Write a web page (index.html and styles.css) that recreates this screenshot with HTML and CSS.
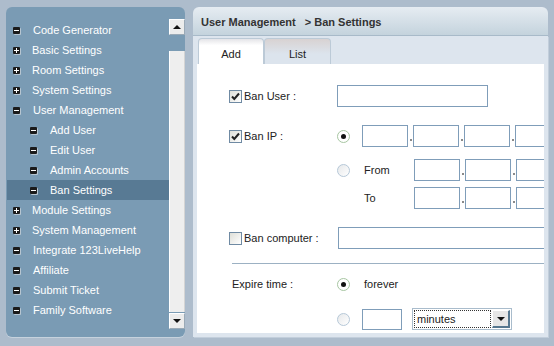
FILE: index.html
```html
<!DOCTYPE html>
<html>
<head>
    <meta charset="UTF-8">
    <title>Ban Settings</title>
    <link rel="stylesheet" href="styles.css">
</head>
<body>
    <div class="page">
        <aside class="sidebar">
            <ul class="menu">
                <li class="item"><span class="ico minus"></span>Code Generator</li>
                <li class="item"><span class="ico plus"></span>Basic Settings</li>
                <li class="item"><span class="ico plus"></span>Room Settings</li>
                <li class="item"><span class="ico plus"></span>System Settings</li>
                <li class="item"><span class="ico minus"></span>User Management</li>
                <li class="item sub"><span class="ico minus"></span>Add User</li>
                <li class="item sub"><span class="ico minus"></span>Edit User</li>
                <li class="item sub"><span class="ico minus"></span>Admin Accounts</li>
                <li class="item sub selected"><span class="ico minus"></span>Ban Settings</li>
                <li class="item"><span class="ico plus"></span>Module Settings</li>
                <li class="item"><span class="ico plus"></span>System Management</li>
                <li class="item"><span class="ico minus"></span>Integrate 123LiveHelp</li>
                <li class="item"><span class="ico minus"></span>Affiliate</li>
                <li class="item"><span class="ico minus"></span>Submit Ticket</li>
                <li class="item"><span class="ico minus"></span>Family Software</li>
            </ul>
            <div class="scrollbar">
                <div class="sb-btn up"></div>
                <div class="sb-thumb"></div>
                <div class="sb-btn down"></div>
            </div>
        </aside>

        <section class="main">
            <div class="main-head">User Management<span class="crumb">&gt; Ban Settings</span></div>
            <div class="main-body">
                <div class="tabs">
                    <div class="tab active">Add</div>
                    <div class="tab">List</div>
                </div>
                <div class="content">
                    <div class="row row-user">
                        <div class="label"><span class="cb checked"><svg width="11" height="11" viewBox="0 0 11 11"><path d="M2 5.5 L4.3 8 L9 2.5" fill="none" stroke="#222" stroke-width="2"/></svg></span>Ban User :</div>
                        <input type="text" class="field wide">
                    </div>

                    <div class="row row-ip">
                        <div class="label"><span class="cb checked"><svg width="11" height="11" viewBox="0 0 11 11"><path d="M2 5.5 L4.3 8 L9 2.5" fill="none" stroke="#222" stroke-width="2"/></svg></span>Ban IP :</div>
                        <div class="opt"><span class="radio on"></span></div>
                        <div class="ip">
                            <input type="text" class="field oct"><span class="dot"></span>
                            <input type="text" class="field oct"><span class="dot"></span>
                            <input type="text" class="field oct"><span class="dot"></span>
                            <input type="text" class="field oct">
                        </div>
                    </div>

                    <div class="row row-from">
                        <div class="label"></div>
                        <div class="opt"><span class="radio"></span></div>
                        <div class="range-label">From</div>
                        <div class="ip">
                            <input type="text" class="field oct"><span class="dot"></span>
                            <input type="text" class="field oct"><span class="dot"></span>
                            <input type="text" class="field oct"><span class="dot"></span>
                            <input type="text" class="field oct">
                        </div>
                    </div>

                    <div class="row row-to">
                        <div class="label"></div>
                        <div class="opt"></div>
                        <div class="range-label">To</div>
                        <div class="ip">
                            <input type="text" class="field oct"><span class="dot"></span>
                            <input type="text" class="field oct"><span class="dot"></span>
                            <input type="text" class="field oct"><span class="dot"></span>
                            <input type="text" class="field oct">
                        </div>
                    </div>

                    <div class="row row-computer">
                        <div class="label"><span class="cb"></span>Ban computer :</div>
                        <input type="text" class="field long">
                    </div>

                    <div class="divider"></div>

                    <div class="row row-expire">
                        <div class="label plain">Expire time :</div>
                        <div class="opt"><span class="radio on"></span></div>
                        <div class="opt-text">forever</div>
                    </div>

                    <div class="row row-period">
                        <div class="label"></div>
                        <div class="opt"><span class="radio"></span></div>
                        <input type="text" class="field amount">
                        <div class="select">
                            <div class="select-text">minutes</div>
                            <div class="select-btn"></div>
                        </div>
                    </div>
                </div>
            </div>
        </section>
    </div>
</body>
</html>
```

FILE: styles.css
```css
body {
    margin: 0;
    width: 554px;
    height: 346px;
    overflow: hidden;
    background-color: #adbccc;
    font-family: 'Liberation Sans', Arial, sans-serif;
    font-size: 11px;
}

.page {
    display: flex;
    gap: 8px;
    padding: 7px 0 0 6px;
}

/* left menu */
.sidebar {
    width: 179px;
    height: 330px;
    background-color: #7a9bb4;
    border-radius: 6px;
    box-shadow: 0 1px 0 #c6d2dd;
    display: flex;
    flex-shrink: 0;
}

.menu {
    list-style: none;
    margin: 0;
    padding: 13px 0 0 1px;
    width: 162px;
}

.item {
    display: flex;
    align-items: center;
    height: 20px;
    padding-left: 6px;
    color: #fff;
    white-space: nowrap;
}

.item.sub {
    padding-left: 23px;
}

.item.selected {
    background-color: #587a94;
}

.ico {
    position: relative;
    width: 7px;
    height: 7px;
    margin-right: 12px;
    background-color: #1b1b1b;
    border-radius: 1px;
    box-shadow: 1px 1px 0 #b7c6d2;
    flex-shrink: 0;
}

.ico.minus {
    margin-right: 13px;
}

.ico::before {
    content: '';
    position: absolute;
    left: 1px;
    top: 3px;
    width: 5px;
    height: 1px;
    background-color: #fff;
}

.ico.plus::after {
    content: '';
    position: absolute;
    left: 3px;
    top: 1px;
    width: 1px;
    height: 5px;
    background-color: #fff;
}

.scrollbar {
    width: 16px;
    margin-top: 12px;
    display: flex;
    flex-direction: column;
}

.sb-btn {
    height: 16px;
    box-sizing: border-box;
    background-color: #ececec;
    border: 1px solid;
    border-color: #fff #9aa9b6 #9aa9b6 #fff;
    display: flex;
    justify-content: center;
    align-items: center;
}

.sb-btn.up::before {
    content: '';
    border-left: 4px solid transparent;
    border-right: 4px solid transparent;
    border-bottom: 4px solid #111;
}

.sb-btn.down::before {
    content: '';
    border-left: 4px solid transparent;
    border-right: 4px solid transparent;
    border-top: 4px solid #111;
}

.sb-thumb {
    height: 261px;
    margin: 16px 0 1px;
    background-color: #eeeeee;
    border-left: 1px solid #fff;
    border-right: 1px solid #d4d4d4;
}

/* main panel */
.main {
    width: 355px;
    display: flex;
    flex-direction: column;
    flex-shrink: 0;
}

.main-head {
    height: 28px;
    line-height: 31px;
    padding-left: 8px;
    border-radius: 6px 6px 0 0;
    border-bottom: 1px solid #a8bac9;
    background: linear-gradient(#e6ecf2, #c4d3dd);
    font-weight: bold;
    color: #333;
}

.crumb {
    margin-left: 9px;
}

.main-body {
    background-color: #dde5ee;
    padding: 2px 4px 4px;
    box-shadow: 1px 1px 0 #c2cedb;
}

.tabs {
    display: flex;
    height: 26px;
    padding-left: 1px;
}

.tab {
    box-sizing: border-box;
    width: 66px;
    height: 26px;
    line-height: 30px;
    text-align: center;
    color: #222;
    border: 1px solid #bccad7;
    border-bottom: none;
    border-radius: 4px 4px 0 0;
    background: linear-gradient(#d8d2d2, #dce4ed 60%);
}

.tab.active {
    background: linear-gradient(#e4e4e8, #fff 25%);
}

.tab + .tab {
    width: 67px;
}

.content {
    height: 269px;
    background-color: #fff;
    overflow: hidden;
    padding-left: 32px;
    color: #222;
}

.row {
    display: flex;
    align-items: center;
    height: 22px;
    white-space: nowrap;
}

.row > * {
    flex-shrink: 0;
}

.row-user { margin-top: 21px; }
.row-ip { margin-top: 18px; }
.row-from { margin-top: 12px; }
.row-to { margin-top: 6px; }
.row-computer { margin-top: 18px; }
.row-expire { margin-top: 9px; }
.row-period { margin-top: 13px; }

.label {
    width: 108px;
    display: flex;
    align-items: center;
}

.label.plain {
    padding-left: 3px;
    width: 105px;
}

.cb {
    box-sizing: border-box;
    width: 13px;
    height: 13px;
    margin-right: 2px;
    border: 1px solid #6f8aa3;
    background: linear-gradient(135deg, #dedfd8, #fff);
    display: flex;
}

.opt {
    width: 25px;
    display: flex;
    align-items: center;
}

.radio {
    position: relative;
    box-sizing: border-box;
    width: 13px;
    height: 13px;
    border-radius: 50%;
    border: 1px solid #b6c8d8;
    background: linear-gradient(135deg, #e6e8ea, #fff);
}

.radio.on {
    border-color: #a7c6a2;
    background: #fff;
}

.radio.on::after {
    content: '';
    position: absolute;
    left: 3px;
    top: 3px;
    width: 5px;
    height: 5px;
    border-radius: 50%;
    background-color: #111;
}

.field {
    box-sizing: border-box;
    height: 22px;
    margin: 0;
    padding: 0 2px;
    border: 1px solid #7f9db9;
    background-color: #fff;
    font-family: inherit;
    font-size: 11px;
}

.field.wide {
    width: 151px;
}

.field.long {
    width: 230px;
    margin-left: 1px;
}

.field.amount {
    width: 40px;
    height: 21px;
}

.ip {
    display: flex;
    height: 22px;
}

.field.oct {
    width: 46px;
}

.dot {
    width: 5px;
    display: flex;
    justify-content: center;
    align-items: flex-end;
    padding-bottom: 6px;
    box-sizing: border-box;
}

.dot::before {
    content: '';
    width: 2px;
    height: 2px;
    background-color: #8a8a8a;
}

.range-label {
    width: 52px;
    padding-left: 2px;
    box-sizing: border-box;
}

.opt-text {
    padding-left: 2px;
}

.divider {
    margin: 14px 0 0 3px;
    width: 400px;
    border-top: 1px solid #9cb1c3;
}

.select {
    box-sizing: border-box;
    width: 100px;
    height: 22px;
    margin-left: 10px;
    padding: 1px;
    border: 1px solid #a9bccc;
    display: flex;
}

.select-text {
    flex: 1;
    border: 1px dotted #333;
    padding-left: 2px;
    line-height: 17px;
    margin-right: 1px;
}

.select-btn {
    box-sizing: border-box;
    width: 18px;
    background-color: #e6e6e6;
    border-right: 2px solid #56778f;
    border-bottom: 2px solid #56778f;
    border-top: 1px solid #fff;
    border-left: 1px solid #fff;
    display: flex;
    justify-content: center;
    align-items: center;
}

.select-btn::before {
    content: '';
    border-left: 4px solid transparent;
    border-right: 4px solid transparent;
    border-top: 4px solid #111;
}
```
